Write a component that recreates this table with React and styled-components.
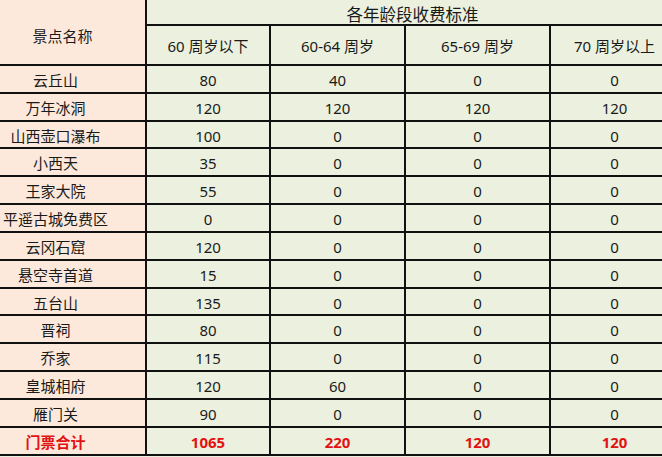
import React from "react";
import styled, { createGlobalStyle } from "styled-components";

const Global = createGlobalStyle`
  html, body { margin: 0; padding: 0; background: #ebf1de; overflow: hidden; }
  body { font-family: "Noto Sans", "Noto Sans CJK SC", sans-serif; }
`;

const Table = styled.table`
  border-collapse: separate;
  border-spacing: 0;
  table-layout: fixed;
  width: 680px;
  font-size: 15px;
  color: #1a1a1a;
`;

const Row = styled.tr`
  height: ${(p) => p.$h}px;
`;

const Cell = styled.td`
  box-sizing: border-box;
  border-right: 2px solid #111;
  border-bottom: 2px solid #111;
  background: ${(p) => (p.$name ? "#fde9dc" : "#ebf1de")};
  text-align: center;
  vertical-align: middle;
  padding: 3px ${(p) => p.$pr || 0}px 0 0;
  white-space: nowrap;
  line-height: 1;
  color: ${(p) => (p.$total ? "#e31212" : "inherit")};
  font-weight: ${(p) => (p.$total ? 700 : 400)};
  overflow: hidden;
`;

const Title = styled(Cell)`
  font-size: 16.5px;
  padding-top: 6px;
`;

const cols = [147, 124, 135, 145, 129];

const data = [
  ["云丘山", 80, 40, 0, 0],
  ["万年冰洞", 120, 120, 120, 120],
  ["山西壶口瀑布", 100, 0, 0, 0],
  ["小西天", 35, 0, 0, 0],
  ["王家大院", 55, 0, 0, 0],
  ["平遥古城免费区", 0, 0, 0, 0],
  ["云冈石窟", 120, 0, 0, 0],
  ["悬空寺首道", 15, 0, 0, 0],
  ["五台山", 135, 0, 0, 0],
  ["晋祠", 80, 0, 0, 0],
  ["乔家", 115, 0, 0, 0],
  ["皇城相府", 120, 60, 0, 0],
  ["雁门关", 90, 0, 0, 0],
];

const totals = ["门票合计", 1065, 220, 120, 120];

export default function App() {
  return (
    <>
      <Global />
      <Table>
        <colgroup>
          {cols.map((w, i) => (
            <col key={i} style={{ width: w }} />
          ))}
        </colgroup>
        <tbody>
          <Row $h={26}>
            <Cell $name rowSpan={2} $pr={20} style={{ paddingTop: 8 }}>
              景点名称
            </Cell>
            <Title colSpan={4}>各年龄段收费标准</Title>
          </Row>
          <Row $h={40}>
            <Cell>60 周岁以下</Cell>
            <Cell>60-64 周岁</Cell>
            <Cell>65-69 周岁</Cell>
            <Cell>70 周岁以上</Cell>
          </Row>
          {data.map((r) => (
            <Row $h={27.84} key={r[0]}>
              <Cell $name $pr={34}>{r[0]}</Cell>
              {r.slice(1).map((v, i) => (
                <Cell key={i}>{v}</Cell>
              ))}
            </Row>
          ))}
          <Row $h={27.84}>
            <Cell $name $pr={34} $total>{totals[0]}</Cell>
            {totals.slice(1).map((v, i) => (
              <Cell key={i} $total>{v}</Cell>
            ))}
          </Row>
        </tbody>
      </Table>
    </>
  );
}
